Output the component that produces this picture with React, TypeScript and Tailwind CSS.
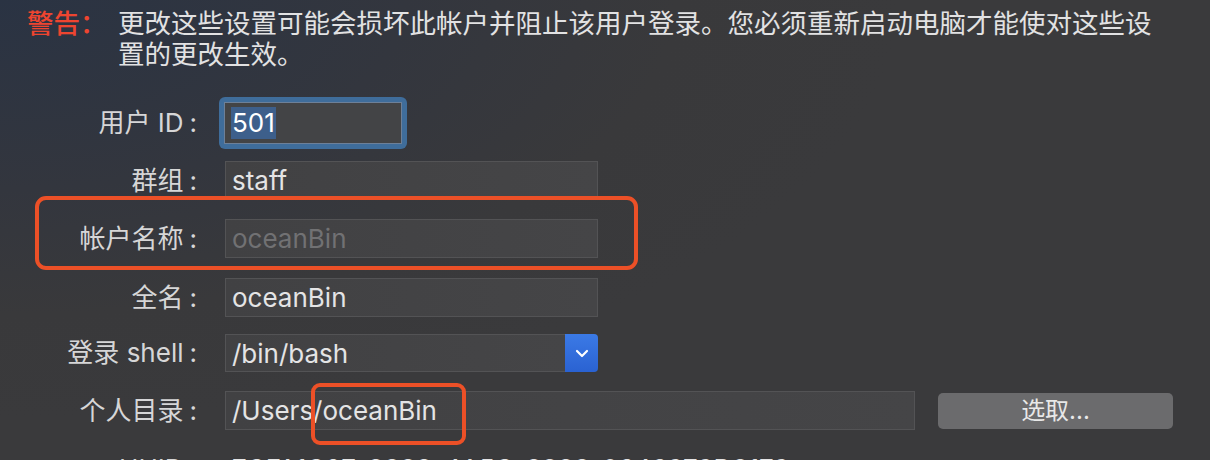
import React from "react";

const font = { fontFamily: 'Inter, "Noto Sans CJK SC", sans-serif' };

function Label({ children }: { children: React.ReactNode }) {
  return (
    <div className="w-[197px] shrink-0 text-right text-[26px] leading-[32px] text-[#d6d6d7]">
      {children}
      <span className="ml-[6px]">:</span>
    </div>
  );
}

function Field({
  text,
  width,
  muted,
}: {
  text: string;
  width: string;
  muted?: boolean;
}) {
  return (
    <div
      className={`${width} h-[39px] ml-[28px] flex items-center pl-[6px] border border-[#535355] bg-[linear-gradient(90deg,#414143,#454547)] text-[26px] ${
        muted ? "text-[#717173]" : "text-[#e4e4e5]"
      }`}
    >
      {text}
    </div>
  );
}

export default function App() {
  return (
    <div
      style={font}
      className="relative w-[1210px] h-[460px] overflow-hidden bg-[radial-gradient(ellipse_900px_420px_at_0%_0%,#2a3343_0%,#33363e_45%,#39393b_75%,#3a3a3c_100%)]"
    >
      {/* warning */}
      <div className="flex pl-[27px] pt-[8px] text-[26.5px] leading-[31px]">
        <div className="w-[91px] shrink-0 text-[#ee4530] font-medium">警告：</div>
        <div className="w-[1045px] text-[#e2e2e3]">
          更改这些设置可能会损坏此帐户并阻止该用户登录。您必须重新启动电脑才能使对这些设置的更改生效。
        </div>
      </div>

      <div className="flex flex-col mt-[27px]">
        {/* user id */}
        <div className="flex items-center h-[52px]">
          <Label>用户 ID</Label>
          <div className="ml-[22px] w-[188px] h-[52px] rounded-[6px] bg-[#3f6d9b] p-[5px]">
            <div className="w-full h-full border border-[#6d8098] bg-[#434446] flex items-center pl-[6px]">
              <span className="bg-[#3d5f8b] text-white text-[26px] leading-[32px] px-[1px]">501</span>
            </div>
          </div>
        </div>

        {/* group */}
        <div className="flex items-center mt-[12px]">
          <Label>群组</Label>
          <Field text="staff" width="w-[373px]" />
        </div>

        {/* account name */}
        <div className="flex items-center mt-[19px]">
          <Label>帐户名称</Label>
          <Field text="oceanBin" width="w-[373px]" muted />
        </div>

        {/* full name */}
        <div className="flex items-center mt-[20px]">
          <Label>全名</Label>
          <Field text="oceanBin" width="w-[373px]" />
        </div>

        {/* shell */}
        <div className="flex items-center mt-[17px]">
          <Label>登录 shell</Label>
          <div className="ml-[28px] flex h-[38px]">
            <div className="w-[340px] h-full flex items-center pl-[6px] border border-[#535355] border-r-0 bg-[linear-gradient(90deg,#414143,#454547)] text-[26px] text-[#e4e4e5]">
              /bin/bash
            </div>
            <div className="w-[33px] h-full rounded-r-[4px] bg-[linear-gradient(180deg,#3b7ae6,#2a62d2)] flex items-center justify-center">
              <svg width="14" height="9" viewBox="0 0 14 9">
                <path d="M2 2 L7 7 L12 2" fill="none" stroke="white" strokeWidth="2.2" strokeLinecap="round" strokeLinejoin="round" />
              </svg>
            </div>
          </div>
        </div>

        {/* home */}
        <div className="flex items-center mt-[19px]">
          <Label>个人目录</Label>
          <Field text="/Users/oceanBin" width="w-[690px]" />
          <button className="ml-[23px] w-[235px] h-[36px] rounded-[5px] bg-[#6b6b6d] text-[24px] leading-[36px] text-[#e8e8e8]">
            选取...
          </button>
        </div>

        {/* uuid */}
        <div className="flex items-center mt-[23px]">
          <Label>UUID</Label>
          <div className="ml-[35px] text-[26px] leading-[32px] text-[#e4e4e5]">
            7CFA1C27-8888-4A5C-8888-0646979D8179
          </div>
        </div>
      </div>

      {/* annotations */}
      <div className="absolute left-[35px] top-[196px] w-[603px] h-[74px] rounded-[11px] border-[4px] border-[#ec5027]" />
      <div className="absolute left-[311px] top-[383px] w-[155px] h-[62px] rounded-[9px] border-[4px] border-[#ec5027]" />
    </div>
  );
}
